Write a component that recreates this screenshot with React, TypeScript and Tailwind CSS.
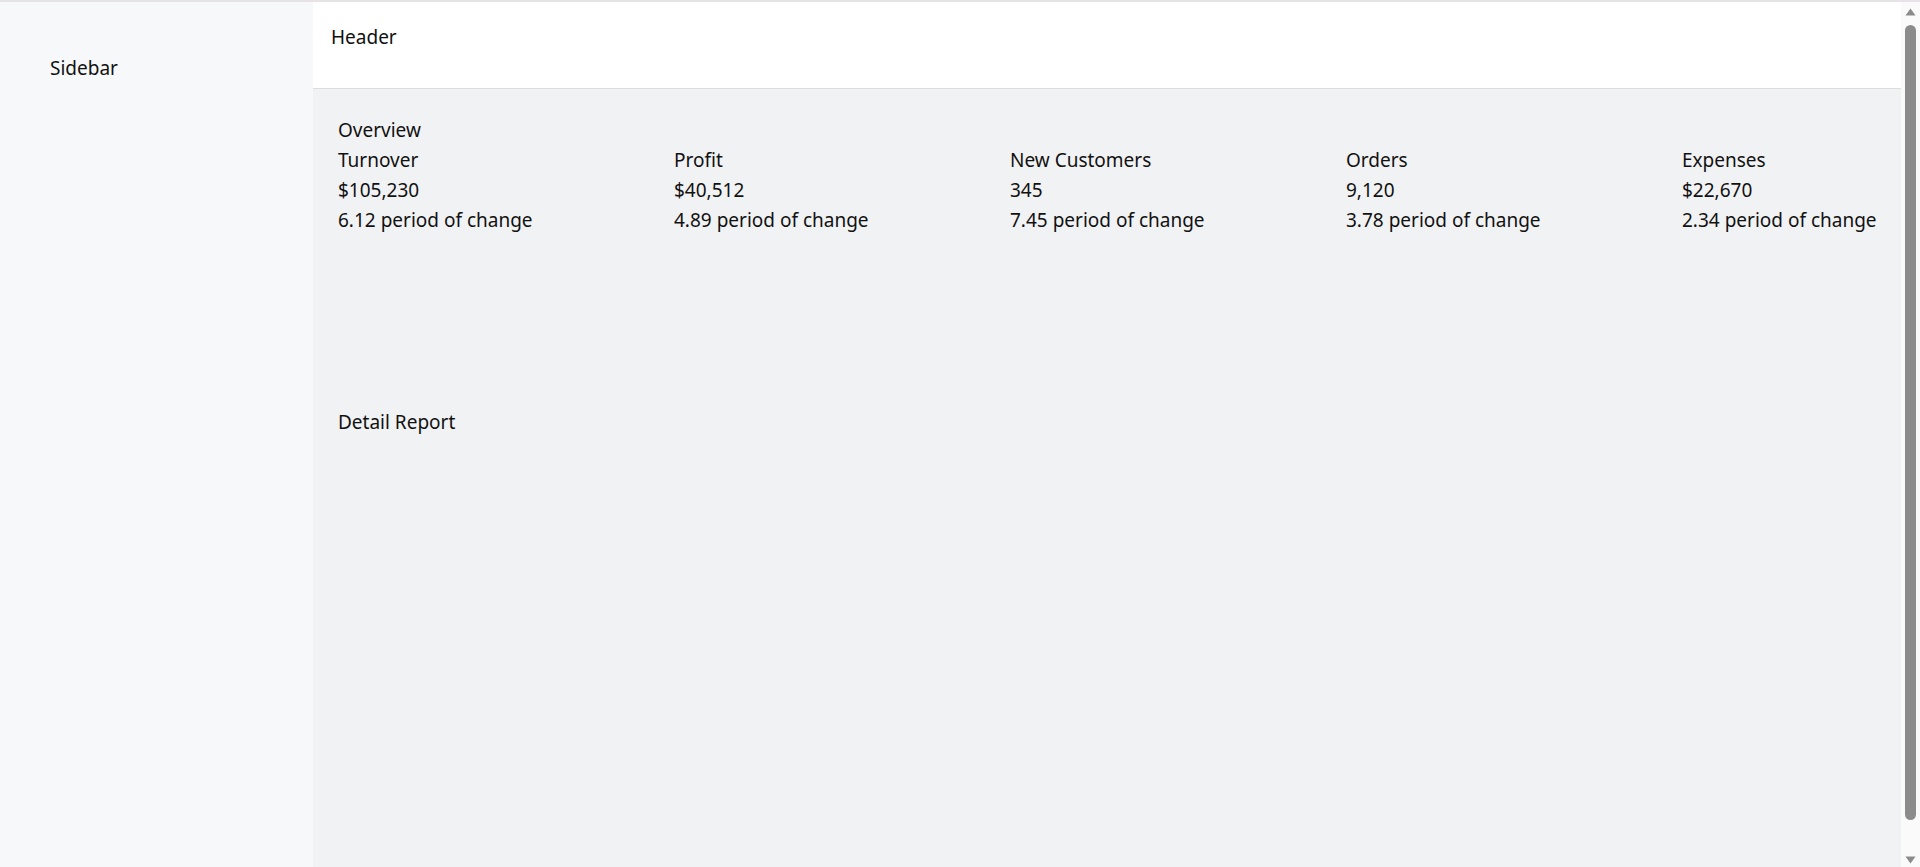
import React from "react";

type Stat = {
    label: string;
    value: string;
    change: string;
};

const stats: Stat[] = [
    { label: "Turnover", value: "$105,230", change: "6.12" },
    { label: "Profit", value: "$40,512", change: "4.89" },
    { label: "New Customers", value: "345", change: "7.45" },
    { label: "Orders", value: "9,120", change: "3.78" },
    { label: "Expenses", value: "$22,670", change: "2.34" },
];

const StatItem = ({ stat }: { stat: Stat }) => {
    return (
        <div className="flex flex-col w-[336px] shrink-0">
            <span>{stat.label}</span>
            <span>{stat.value}</span>
            <span>{stat.change} period of change</span>
        </div>
    );
};

// the window's scrollbar, as it shows in the picture
const ScrollBar = () => {
    return (
        <div className="flex flex-col items-center w-[19px] shrink-0 bg-[#fafafa]">
            <svg width="11" height="8" viewBox="0 0 11 8" className="mt-[6px]">
                <path d="M5.5 0.5 L10.5 7.5 L0.5 7.5 Z" fill="#8b8b8b" />
            </svg>
            <div className="w-[11px] h-[795px] mt-[9px] rounded-full bg-[#8b8b8b]" />
            <svg width="11" height="8" viewBox="0 0 11 8" className="mt-[36px]">
                <path d="M0.5 0.5 L10.5 0.5 L5.5 7.5 Z" fill="#8b8b8b" />
            </svg>
        </div>
    );
};

const App = () => {
    return (
        <div className="flex h-[867px] overflow-hidden border-t-2 border-[#e7e2e5]">
            <div
                className="flex flex-1 min-w-0 text-[19px] leading-[30px] text-[#111111]"
                style={{ fontFamily: '"Noto Sans", "Open Sans", sans-serif' }}
            >
                <aside className="w-[313px] shrink-0 bg-[#f7f8fa] pt-[51px] px-[50px]">
                    <span>Sidebar</span>
                </aside>

                <div className="flex flex-col flex-1 min-w-0 bg-[#f1f2f4] overflow-hidden">
                    <header className="h-[87px] shrink-0 bg-white border-b border-[#dddddd] pt-[20px] px-[18px]">
                        <span>Header</span>
                    </header>

                    <main className="flex flex-col pt-[26px] px-[25px] pb-[25px]">
                        <section className="flex flex-col h-[292px]">
                            <span>Overview</span>
                            <div className="flex">
                                {stats.map((stat) => (
                                    <StatItem key={stat.label} stat={stat} />
                                ))}
                            </div>
                        </section>

                        <section className="flex flex-col">
                            <span>Detail Report</span>
                        </section>
                    </main>
                </div>
            </div>

            <ScrollBar />
        </div>
    );
};

export default App;
